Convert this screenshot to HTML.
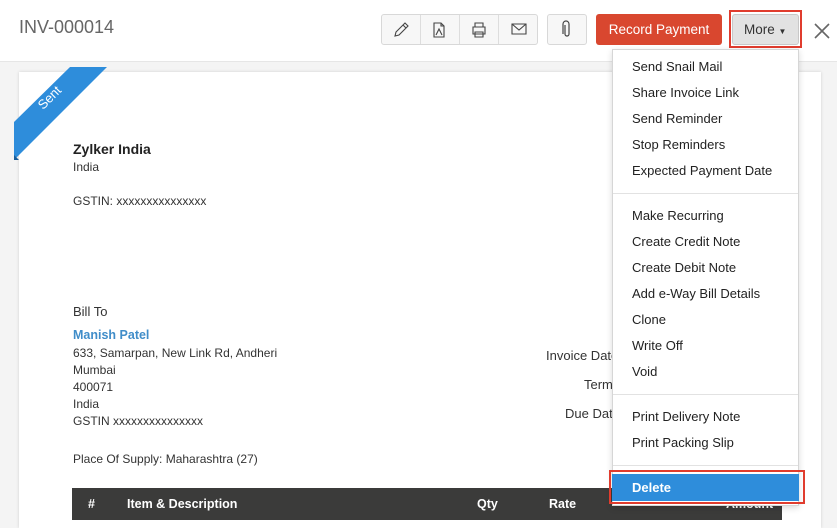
<!DOCTYPE html>
<html style="width:837px;height:528px;overflow:hidden"><head><meta charset="utf-8"><style>
*{margin:0;padding:0;box-sizing:border-box}
body{width:837px;height:528px;overflow:hidden;background:#fff;font-family:"Liberation Sans",sans-serif;color:#333;position:relative}
.a{position:absolute;white-space:nowrap}
.hdr{left:0;top:0;width:837px;height:62px;background:#fff;border-bottom:1px solid #e6e6e6}
.bg{left:0;top:62px;width:837px;height:466px;background:#f4f4f4}
.paper{left:19px;top:72px;width:802px;height:456px;background:#fff;box-shadow:0 0 3px rgba(0,0,0,.15)}
.t{font-size:12px;color:#333}
.btn{border:1px solid #d8d8d8;background:#f7f7f7;border-radius:3px}
.dd{left:612px;top:49px;width:187px;height:457px;background:#fff;border:1px solid #d6d6d6;box-shadow:0 2px 6px rgba(0,0,0,.15)}
.it{left:632px;font-size:13px;color:#222}
.sep{left:613px;width:185px;height:1px;background:#e2e2e2}
.th{font-size:12.5px;color:#fff;font-weight:bold;top:497px}
</style></head><body>
<div class="a hdr"></div>
<div class="a bg"></div>
<div class="a paper"></div>
<div class="a" style="left:19px;top:17px;font-size:18px;color:#666">INV-000014</div>

<div class="a btn" style="left:381px;top:14px;width:157px;height:31px"></div>
<div class="a" style="left:420px;top:15px;width:1px;height:29px;background:#ddd"></div>
<div class="a" style="left:459px;top:15px;width:1px;height:29px;background:#ddd"></div>
<div class="a" style="left:498px;top:15px;width:1px;height:29px;background:#ddd"></div>
<svg class="a" style="left:381px;top:14px" width="157" height="31" fill="none" stroke="#444" stroke-width="1.1">
<path d="M14 22 L15 18 L24 9 L27 12 L18 21 Z M22 11 L25 14"/>
<path d="M53 9 H60 L63 12 V23 H53 Z M60 9 V12 H63 M55 21 L58 15 L61 21"/>
<path d="M92 13 H104 V20 H92 Z M94 13 V9 H102 V13 M94 18 H102 V23 H94 Z"/>
<path d="M131 10 H145 V20 H131 Z M131 10 L138 16 L145 10"/>
</svg>
<div class="a btn" style="left:547px;top:14px;width:40px;height:31px"></div>
<svg class="a" style="left:547px;top:14px" width="40" height="31" fill="none" stroke="#444" stroke-width="1.2"><path d="M18 11 V20 A2 2 0 0 0 22 20 V10 A3 3 0 0 0 16 10 V20"/></svg>
<div class="a" style="left:596px;top:14px;width:126px;height:31px;background:#d9472f;border-radius:3px;color:#fff;font-size:13.5px;line-height:31px;text-align:center">Record Payment</div>
<div class="a" style="left:729px;top:10px;width:73px;height:38px;border:2px solid #e03c2e"></div>
<div class="a" style="left:732px;top:14px;width:67px;height:31px;background:#e2e2e2;border:1px solid #c8c8c8;border-radius:3px;font-size:13.5px;line-height:29px;padding-left:11px;color:#333">More <span style="font-size:8px">▼</span></div>
<svg class="a" style="left:813px;top:22px" width="18" height="18" stroke="#666" stroke-width="1.6"><path d="M2 2 L16 16 M16 2 L2 16"/></svg>

<svg class="a" style="left:14px;top:67px" width="94" height="94"><polygon points="0,55 56,0 93,0 0,93" fill="#2e8ddb"/><polygon points="0,93 0,88 5,93" fill="#1a5e9a"/></svg>
<div class="a" style="left:36px;top:90px;color:#fff;font-size:13px;transform:rotate(-45deg)">Sent</div>

<div class="a" style="left:73px;top:141px;font-size:14px;font-weight:bold;color:#222">Zylker India</div>
<div class="a t" style="left:73px;top:160px">India</div>
<div class="a t" style="left:73px;top:194px">GSTIN: xxxxxxxxxxxxxxx</div>
<div class="a" style="left:73px;top:304px;font-size:13px">Bill To</div>
<div class="a" style="left:73px;top:328px;font-size:12.5px;font-weight:bold;color:#408dc9">Manish Patel</div>
<div class="a t" style="left:73px;top:346px">633, Samarpan, New Link Rd, Andheri</div>
<div class="a t" style="left:73px;top:363px">Mumbai</div>
<div class="a t" style="left:73px;top:380px">400071</div>
<div class="a t" style="left:73px;top:397px">India</div>
<div class="a t" style="left:73px;top:414px">GSTIN xxxxxxxxxxxxxxx</div>
<div class="a t" style="left:73px;top:452px">Place Of Supply: Maharashtra (27)</div>
<div class="a" style="left:546px;top:348px;font-size:13px">Invoice Date</div>
<div class="a" style="left:584px;top:377px;font-size:13px">Terms</div>
<div class="a" style="left:565px;top:406px;font-size:13px">Due Date</div>

<div class="a" style="left:72px;top:488px;width:710px;height:32px;background:#3b3b3a"></div>
<div class="a th" style="left:88px">#</div>
<div class="a th" style="left:127px">Item &amp; Description</div>
<div class="a th" style="left:477px">Qty</div>
<div class="a th" style="left:549px">Rate</div>
<div class="a th" style="left:726px">Amount</div>

<div class="a dd"></div>
<div class="a it" style="top:59px">Send Snail Mail</div>
<div class="a it" style="top:85px">Share Invoice Link</div>
<div class="a it" style="top:111px">Send Reminder</div>
<div class="a it" style="top:137px">Stop Reminders</div>
<div class="a it" style="top:163px">Expected Payment Date</div>
<div class="a sep" style="top:193px"></div>
<div class="a it" style="top:208px">Make Recurring</div>
<div class="a it" style="top:234px">Create Credit Note</div>
<div class="a it" style="top:260px">Create Debit Note</div>
<div class="a it" style="top:286px">Add e-Way Bill Details</div>
<div class="a it" style="top:312px">Clone</div>
<div class="a it" style="top:338px">Write Off</div>
<div class="a it" style="top:364px">Void</div>
<div class="a sep" style="top:394px"></div>
<div class="a it" style="top:409px">Print Delivery Note</div>
<div class="a it" style="top:435px">Print Packing Slip</div>
<div class="a sep" style="top:465px"></div>
<div class="a" style="left:609px;top:470px;width:196px;height:34px;border:2px solid #e03c2e"></div>
<div class="a" style="left:612px;top:474px;width:187px;height:27px;background:#2e8ddb"></div>
<div class="a" style="left:632px;top:480px;font-size:13px;color:#fff;font-weight:bold">Delete</div>
</body></html>
